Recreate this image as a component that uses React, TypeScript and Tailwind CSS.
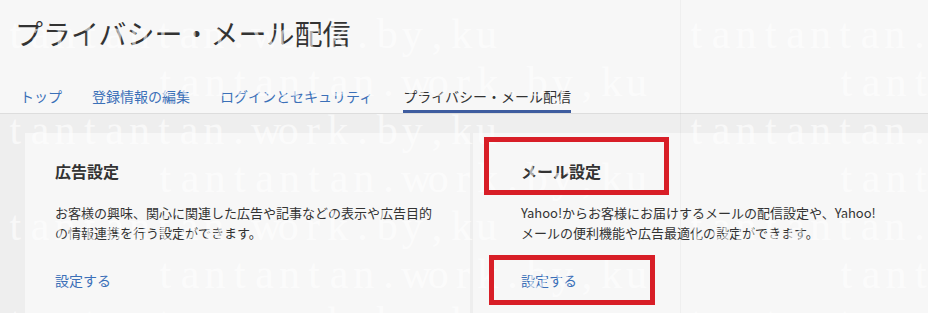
import React from "react";

const WM = "tantantan.work.by,ku".split("");

function Mark({ left, top }: { left: number; top: number }) {
  return (
    <span className="absolute flex whitespace-nowrap" style={{ left, top }}>
      {WM.map((c, k) => (
        <span key={k} className="inline-block w-[24.8px] text-center">
          {c}
        </span>
      ))}
    </span>
  );
}

export default function App() {
  const rows = [0, 1, 2, 3, 4, 5, 6];
  return (
    <div className="relative w-[928px] h-[313px] overflow-hidden bg-[#eeeeee] text-[#333333] font-['Noto_Sans_CJK_JP','Noto_Sans',sans-serif]">
      <header className="bg-[#f7f7f7] border-b border-[#dddddd]">
        <h1 className="pl-[15px] pt-[19px] text-[28px] leading-[28px] font-normal text-[#333333]">
          プライバシー・メール配信
        </h1>
        <nav className="mt-[39px] flex gap-[30px] pl-[20px] text-[14px] leading-[20px]">
          <a className="pb-[4px] border-b-[3px] border-transparent text-[#3b70b8]">トップ</a>
          <a className="pb-[4px] border-b-[3px] border-transparent text-[#3b70b8]">登録情報の編集</a>
          <a className="pb-[4px] border-b-[3px] border-transparent text-[#3b70b8]">ログインとセキュリティ</a>
          <a className="pb-[4px] border-b-[3px] border-[#3e5c9f] text-[#333333]">プライバシー・メール配信</a>
        </nav>
      </header>
      <main className="flex gap-[3px] pt-[19px] pl-[25px]">
        <section className="w-[445px] h-[200px] shrink-0 bg-[#f7f7f7] pl-[30px] pr-[30px] pt-[26px]">
          <h2 className="text-[16px] leading-[24px] font-bold">広告設定</h2>
          <p className="mt-[20px] text-[13px] leading-[20px]">
            お客様の興味、関心に関連した広告や記事などの表示や広告目的
            <br />
            の情報連携を行う設定ができます。
          </p>
          <a className="mt-[27px] block text-[14px] leading-[20px] text-[#3b70b8]">設定する</a>
        </section>
        <section className="flex-1 h-[200px] bg-[#f7f7f7] pl-[48px] pr-[20px] pt-[26px]">
          <h2 className="text-[16px] leading-[24px] font-bold">メール設定</h2>
          <p className="mt-[20px] text-[13px] leading-[20px] whitespace-nowrap">
            Yahoo!からお客様にお届けするメールの配信設定や、Yahoo!
            <br />
            メールの便利機能や広告最適化の設定ができます。
          </p>
          <a className="mt-[27px] block text-[14px] leading-[20px] text-[#3b70b8]">設定する</a>
        </section>
      </main>

      {/* watermark overlay */}
      <div className="pointer-events-none absolute inset-0 font-['Liberation_Serif',serif] text-[42px] leading-[48px] text-white/60">
        <div className="absolute left-[680px] top-0 h-full w-px bg-black/[0.03]" />
        {rows.map((i) => {
          const left = i % 2 === 0 ? 3 : 153;
          const top = 10 + i * 48;
          return [0, 1].map((j) => <Mark key={`${i}-${j}`} left={left + j * 681} top={top} />);
        })}
      </div>

      {/* red annotation boxes */}
      <div className="pointer-events-none absolute left-[484px] top-[137px] w-[185px] h-[58px] border-[5px] border-[#d81e27]" />
      <div className="pointer-events-none absolute left-[489px] top-[255px] w-[166px] h-[50px] border-[5px] border-[#d81e27]" />
    </div>
  );
}
